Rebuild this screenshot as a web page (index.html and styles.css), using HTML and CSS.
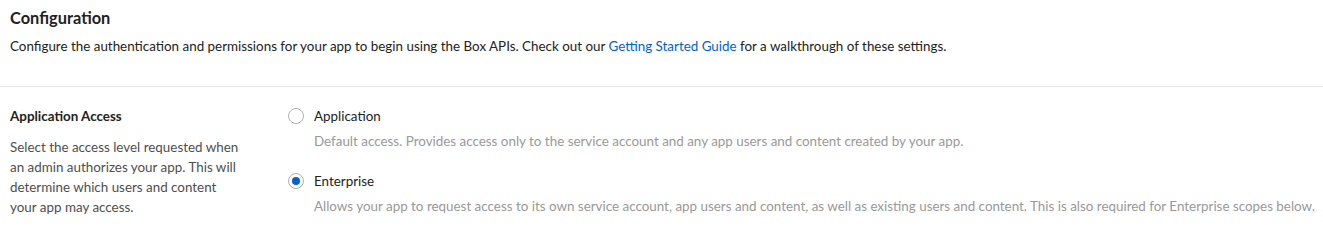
FILE: index.html
```html
<!DOCTYPE html>
<html lang="en">
<head>
    <meta charset="UTF-8">
    <meta name="viewport" content="width=device-width, initial-scale=1.0">
    <title>Configuration</title>
    <link rel="stylesheet" href="styles.css">
</head>
<body>
    <div class="page-header">
        <h2 class="page-title">Configuration</h2>
        <p class="page-desc">Configure the authentication and permissions for your app to begin using the Box APIs. Check out our <a href="#">Getting Started Guide</a> for a walkthrough of these settings.</p>
    </div>

    <div class="section">
        <div class="section-info">
            <h3 class="section-title">Application Access</h3>
            <p class="section-desc">Select the access level requested when an admin authorizes your app. This will determine which users and content your app may access.</p>
        </div>
        <div class="section-options">
            <label class="option">
                <span class="radio"></span>
                <span class="option-body">
                    <span class="option-label">Application</span>
                    <span class="option-desc">Default access. Provides access only to the service account and any app users and content created by your app.</span>
                </span>
            </label>
            <label class="option">
                <span class="radio checked"></span>
                <span class="option-body">
                    <span class="option-label">Enterprise</span>
                    <span class="option-desc">Allows your app to request access to its own service account, app users and content, as well as existing users and content. This is also required for Enterprise scopes below.</span>
                </span>
            </label>
        </div>
    </div>
</body>
</html>
```

FILE: styles.css
```css
:root {
    --text: #222222;
    --muted: #999999;
    --blue: #0061d5;
    --border: #e8e8e8;
}

body {
    font-family: Lato, "Open Sans", Arial, sans-serif;
    font-size: 13.4px;
    line-height: 20px;
    color: var(--text);
    background: #ffffff;
    margin: 0;
}

.page-header {
    padding: 8px 10px 30px;
    border-bottom: 1px solid var(--border);
}

.page-title {
    font-size: 16.4px;
    font-weight: bold;
    line-height: 20px;
    margin: 0 0 8px;
}

.page-desc {
    margin: 0;
}

.page-desc a {
    color: var(--blue);
    text-decoration: none;
}

.section {
    display: flex;
    padding: 19px 0 0 10px;
}

.section-info {
    width: 232px;
    flex-shrink: 0;
    margin-right: 46px;
}

.section-title {
    font-size: 13.4px;
    font-weight: bold;
    margin: 0 0 11px;
}

.section-desc {
    margin: 0;
    color: #4e4e4e;
}

.section-options {
    display: flex;
    flex-direction: column;
    gap: 20px;
}

.option {
    display: flex;
    gap: 10px;
}

.radio {
    width: 14px;
    height: 14px;
    border: 1px solid #b0b0b0;
    border-radius: 50%;
    margin-top: 2px;
    flex-shrink: 0;
    box-sizing: content-box;
    display: flex;
    align-items: center;
    justify-content: center;
}

.radio.checked::after {
    content: "";
    width: 8px;
    height: 8px;
    border-radius: 50%;
    background: var(--blue);
}

.option-body {
    display: flex;
    flex-direction: column;
    gap: 5px;
}

.option-desc {
    color: var(--muted);
    white-space: nowrap;
}
```
